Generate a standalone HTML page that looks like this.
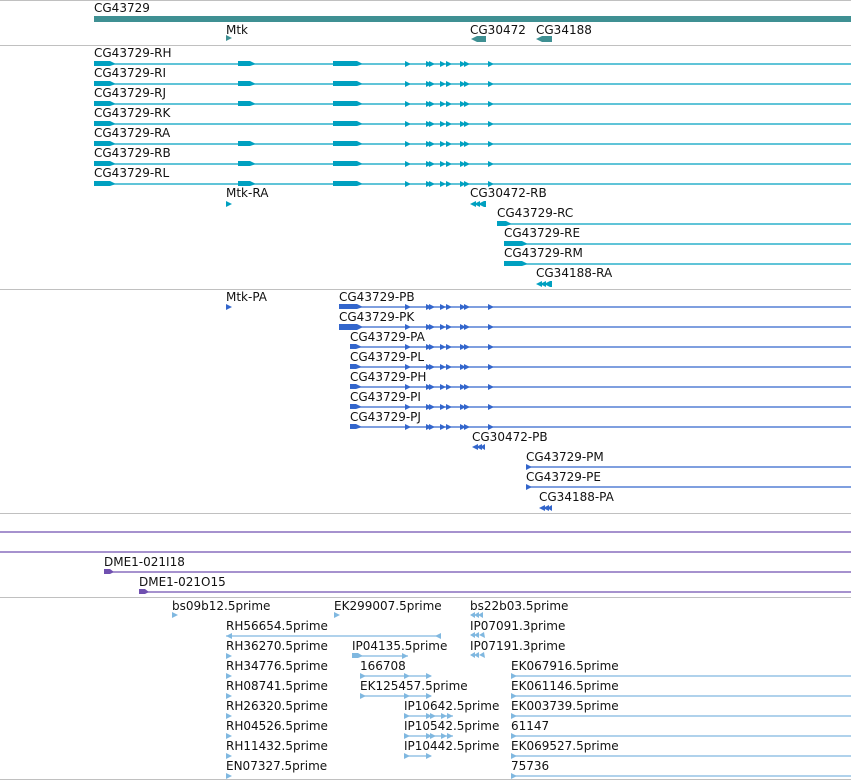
<!DOCTYPE html>
<html><head><meta charset="utf-8"><style>
html,body{margin:0;padding:0;background:#fff;width:851px;height:781px;overflow:hidden}
svg text{font-family:"DejaVu Sans","Liberation Sans",sans-serif;font-size:12px;fill:#111}
</style></head><body>
<svg width="851" height="781" viewBox="0 0 851 781" xmlns="http://www.w3.org/2000/svg">
<defs>
<g id="tr" fill="#00a0c0">
<line x1="94" y1="0" x2="851" y2="0" stroke="#00a0c0" stroke-width="1.2"/>
<polygon points="94,-3 110,-3 116,0 110,2 94,2"/>
<polygon points="238,-3 250,-3 256,0 250,2 238,2"/>
<polygon points="333,-3 357,-3 363,0 357,2 333,2"/>
<polygon points="405,-3 411,0 405,3"/><polygon points="426,-3 432,0 426,3"/><polygon points="429,-3 435,0 429,3"/>
<polygon points="440,-3 446,0 440,3"/><polygon points="446,-3 452,0 446,3"/>
<polygon points="460,-3 466,0 460,3"/><polygon points="464,-3 470,0 464,3"/><polygon points="488,-3 494,0 488,3"/>
</g>
<g id="trk" fill="#00a0c0">
<line x1="94" y1="0" x2="851" y2="0" stroke="#00a0c0" stroke-width="1.2"/>
<polygon points="94,-3 110,-3 116,0 110,2 94,2"/>
<polygon points="333,-3 357,-3 363,0 357,2 333,2"/>
<polygon points="405,-3 411,0 405,3"/><polygon points="426,-3 432,0 426,3"/><polygon points="429,-3 435,0 429,3"/>
<polygon points="440,-3 446,0 440,3"/><polygon points="446,-3 452,0 446,3"/>
<polygon points="460,-3 466,0 460,3"/><polygon points="464,-3 470,0 464,3"/><polygon points="488,-3 494,0 488,3"/>
</g>
<g id="arr" fill="#3366cc">
<polygon points="405,-3 411,0 405,3"/><polygon points="426,-3 432,0 426,3"/><polygon points="429,-3 435,0 429,3"/>
<polygon points="440,-3 446,0 440,3"/><polygon points="446,-3 452,0 446,3"/>
<polygon points="460,-3 466,0 460,3"/><polygon points="464,-3 470,0 464,3"/><polygon points="488,-3 494,0 488,3"/>
</g>
</defs>

<!-- separators -->
<g stroke="#c0c0c0" stroke-width="1">
<line x1="0" y1="0.5" x2="851" y2="0.5"/><line x1="0" y1="45.5" x2="851" y2="45.5"/>
<line x1="0" y1="289.5" x2="851" y2="289.5"/><line x1="0" y1="513.5" x2="851" y2="513.5"/>
<line x1="0" y1="597.5" x2="851" y2="597.5"/><line x1="0" y1="779.5" x2="851" y2="779.5"/>
</g>

<!-- gene track -->
<text x="94" y="12">CG43729</text>
<rect x="94" y="16" width="757" height="6" fill="#3f9093"/>
<text x="226" y="34">Mtk</text>
<polygon points="226,35 232,38 226,41" fill="#3f9093"/>
<text x="470" y="34">CG30472</text>
<polygon points="471,39 477,36 486,36 486,42 477,42" fill="#3f9093"/>
<text x="536" y="34">CG34188</text>
<polygon points="536,39 542,36 552,36 552,42 542,42" fill="#3f9093"/>

<!-- transcripts -->
<text x="94" y="57">CG43729-RH</text><use href="#tr" y="64"/>
<text x="94" y="77">CG43729-RI</text><use href="#tr" y="84"/>
<text x="94" y="97">CG43729-RJ</text><use href="#tr" y="104"/>
<text x="94" y="117">CG43729-RK</text><use href="#trk" y="124"/>
<text x="94" y="137">CG43729-RA</text><use href="#tr" y="144"/>
<text x="94" y="157">CG43729-RB</text><use href="#tr" y="164"/>
<text x="94" y="177">CG43729-RL</text><use href="#tr" y="184"/>
<text x="226" y="197">Mtk-RA</text><polygon points="226,201 232,204 226,207" fill="#00a0c0"/>
<text x="470" y="197">CG30472-RB</text>
<g fill="#00a0c0"><polygon points="470,204 476,201 476,207"/><polygon points="474,204 480,201 480,207"/><polygon points="478,204 484,201 486,201 486,207 484,207"/></g>
<text x="497" y="217">CG43729-RC</text>
<line x1="497" y1="224" x2="851" y2="224" stroke="#00a0c0" stroke-width="1.2"/>
<polygon points="497,221 506,221 512,224 506,226 497,226" fill="#00a0c0"/>
<text x="504" y="237">CG43729-RE</text>
<line x1="504" y1="244" x2="851" y2="244" stroke="#00a0c0" stroke-width="1.2"/>
<polygon points="504,241 522,241 528,244 522,246 504,246" fill="#00a0c0"/>
<text x="504" y="257">CG43729-RM</text>
<line x1="504" y1="264" x2="851" y2="264" stroke="#00a0c0" stroke-width="1.2"/>
<polygon points="504,261 522,261 528,264 522,266 504,266" fill="#00a0c0"/>
<text x="536" y="277">CG34188-RA</text>
<g fill="#00a0c0"><polygon points="536,284 542,281 542,287"/><polygon points="540,284 546,281 546,287"/><polygon points="544,284 550,281 552,281 552,287 550,287"/></g>

<!-- proteins -->
<text x="226" y="301">Mtk-PA</text><polygon points="226,304 232,307 226,310" fill="#3366cc"/>
<g stroke="#3366cc" stroke-width="1.2">
<line x1="339" y1="307" x2="851" y2="307"/><line x1="339" y1="327" x2="851" y2="327"/>
<line x1="350" y1="347" x2="851" y2="347"/><line x1="350" y1="367" x2="851" y2="367"/>
<line x1="350" y1="387" x2="851" y2="387"/><line x1="350" y1="407" x2="851" y2="407"/>
<line x1="350" y1="427" x2="851" y2="427"/>
<line x1="526" y1="467" x2="851" y2="467"/><line x1="526" y1="487" x2="851" y2="487"/>
</g>
<text x="339" y="301">CG43729-PB</text>
<polygon points="339,304 357,304 363,307 357,309 339,309" fill="#3366cc"/><use href="#arr" y="307"/>
<text x="339" y="321">CG43729-PK</text>
<polygon points="339,324 357,324 363,327 357,330 339,330" fill="#3366cc"/><use href="#arr" y="327"/>
<text x="350" y="341">CG43729-PA</text>
<polygon points="350,344 356,344 362,347 356,349 350,349" fill="#3366cc"/><use href="#arr" y="347"/>
<text x="350" y="361">CG43729-PL</text>
<polygon points="350,364 356,364 362,367 356,369 350,369" fill="#3366cc"/><use href="#arr" y="367"/>
<text x="350" y="381">CG43729-PH</text>
<polygon points="350,384 356,384 362,387 356,389 350,389" fill="#3366cc"/><use href="#arr" y="387"/>
<text x="350" y="401">CG43729-PI</text>
<polygon points="350,404 356,404 362,407 356,409 350,409" fill="#3366cc"/><use href="#arr" y="407"/>
<text x="350" y="421">CG43729-PJ</text>
<polygon points="350,424 356,424 362,427 356,429 350,429" fill="#3366cc"/><use href="#arr" y="427"/>
<text x="472" y="441">CG30472-PB</text>
<g fill="#3366cc"><polygon points="472,447 478,444 478,450"/><polygon points="476,447 482,444 482,450"/><polygon points="480,447 485,444 485,450"/></g>
<text x="526" y="461">CG43729-PM</text><polygon points="526,464 532,467 526,470" fill="#3366cc"/>
<text x="526" y="481">CG43729-PE</text><polygon points="526,484 532,487 526,490" fill="#3366cc"/>
<text x="539" y="501">CG34188-PA</text>
<g fill="#3366cc"><polygon points="539,508 545,505 545,511"/><polygon points="543,508 549,505 549,511"/><polygon points="547,508 552,505 552,511"/></g>

<!-- purple -->
<g stroke="#7050b0" stroke-width="1.2">
<line x1="0" y1="532" x2="851" y2="532"/><line x1="0" y1="552" x2="851" y2="552"/>
<line x1="104" y1="572" x2="851" y2="572"/><line x1="139" y1="592" x2="851" y2="592"/>
</g>
<text x="104" y="566">DME1-021I18</text>
<polygon points="104,569 110,569 114,572 110,574 104,574" fill="#7050b0"/>
<text x="139" y="586">DME1-021O15</text>
<polygon points="139,589 145,589 149,592 145,594 139,594" fill="#7050b0"/>

<!-- ESTs -->
<g fill="#80b8e0">
<text x="172" y="610">bs09b12.5prime</text><polygon points="172,612 178,615 172,618"/>
<text x="334" y="610">EK299007.5prime</text><polygon points="334,612 340,615 334,618"/>
<text x="470" y="610">bs22b03.5prime</text>
<polygon points="470,615 475,612 475,618"/><polygon points="474,615 479,612 479,618"/><polygon points="478,615 483,612 483,618"/>

<text x="226" y="630">RH56654.5prime</text>
<line x1="226" y1="636" x2="441" y2="636" stroke="#80b8e0" stroke-width="1.2"/>
<polygon points="226,636 232,633 232,639"/><polygon points="435,636 441,633 441,639"/>
<text x="470" y="630">IP07091.3prime</text>
<polygon points="470,635 475,632 475,638"/><polygon points="474,635 479,632 479,638"/><polygon points="479,635 484,632 485,638"/>

<text x="226" y="650">RH36270.5prime</text><polygon points="226,653 232,656 226,659"/>
<text x="352" y="650">IP04135.5prime</text>
<line x1="352" y1="656" x2="408" y2="656" stroke="#80b8e0" stroke-width="1.2"/>
<polygon points="352,653 358,653 363,656 358,658 352,658"/><polygon points="402,653 408,656 402,659"/>
<text x="470" y="650">IP07191.3prime</text>
<polygon points="470,655 475,652 475,658"/><polygon points="474,655 479,652 479,658"/><polygon points="479,655 484,652 485,658"/>

<text x="226" y="670">RH34776.5prime</text><polygon points="226,673 232,676 226,679"/>
<text x="360" y="670">166708</text>
<line x1="360" y1="676" x2="431" y2="676" stroke="#80b8e0" stroke-width="1.2"/>
<polygon points="360,673 366,676 360,679"/><polygon points="404,673 410,676 404,679"/><polygon points="426,673 432,676 426,679"/>
<text x="511" y="670">EK067916.5prime</text>
<line x1="511" y1="676" x2="851" y2="676" stroke="#80b8e0" stroke-width="1.2"/><polygon points="511,673 517,676 511,679"/>

<text x="226" y="690">RH08741.5prime</text><polygon points="226,693 232,696 226,699"/>
<text x="360" y="690">EK125457.5prime</text>
<line x1="360" y1="696" x2="431" y2="696" stroke="#80b8e0" stroke-width="1.2"/>
<polygon points="360,693 366,696 360,699"/><polygon points="404,693 410,696 404,699"/><polygon points="426,693 432,696 426,699"/>
<text x="511" y="690">EK061146.5prime</text>
<line x1="511" y1="696" x2="851" y2="696" stroke="#80b8e0" stroke-width="1.2"/><polygon points="511,693 517,696 511,699"/>

<text x="226" y="710">RH26320.5prime</text><polygon points="226,713 232,716 226,719"/>
<text x="404" y="710">IP10642.5prime</text>
<line x1="404" y1="716" x2="453" y2="716" stroke="#80b8e0" stroke-width="1.2"/>
<polygon points="404,713 410,716 404,719"/><polygon points="426,713 432,716 426,719"/><polygon points="430,713 436,716 430,719"/><polygon points="441,713 447,716 441,719"/><polygon points="447,713 453,716 447,719"/>
<text x="511" y="710">EK003739.5prime</text>
<line x1="511" y1="716" x2="851" y2="716" stroke="#80b8e0" stroke-width="1.2"/><polygon points="511,713 517,716 511,719"/>

<text x="226" y="730">RH04526.5prime</text><polygon points="226,733 232,736 226,739"/>
<text x="404" y="730">IP10542.5prime</text>
<line x1="404" y1="736" x2="453" y2="736" stroke="#80b8e0" stroke-width="1.2"/>
<polygon points="404,733 410,736 404,739"/><polygon points="426,733 432,736 426,739"/><polygon points="430,733 436,736 430,739"/><polygon points="441,733 447,736 441,739"/><polygon points="447,733 453,736 447,739"/>
<text x="511" y="730">61147</text>
<line x1="511" y1="736" x2="851" y2="736" stroke="#80b8e0" stroke-width="1.2"/><polygon points="511,733 517,736 511,739"/>

<text x="226" y="750">RH11432.5prime</text><polygon points="226,753 232,756 226,759"/>
<text x="404" y="750">IP10442.5prime</text>
<line x1="404" y1="756" x2="431" y2="756" stroke="#80b8e0" stroke-width="1.2"/>
<polygon points="404,753 410,756 404,759"/><polygon points="426,753 432,756 426,759"/>
<text x="511" y="750">EK069527.5prime</text>
<line x1="511" y1="756" x2="851" y2="756" stroke="#80b8e0" stroke-width="1.2"/><polygon points="511,753 517,756 511,759"/>

<text x="226" y="770">EN07327.5prime</text><polygon points="226,773 232,776 226,779"/>
<text x="511" y="770">75736</text>
<line x1="511" y1="776" x2="851" y2="776" stroke="#80b8e0" stroke-width="1.2"/><polygon points="511,773 517,776 511,779"/>
</g>
</svg>
</body></html>
